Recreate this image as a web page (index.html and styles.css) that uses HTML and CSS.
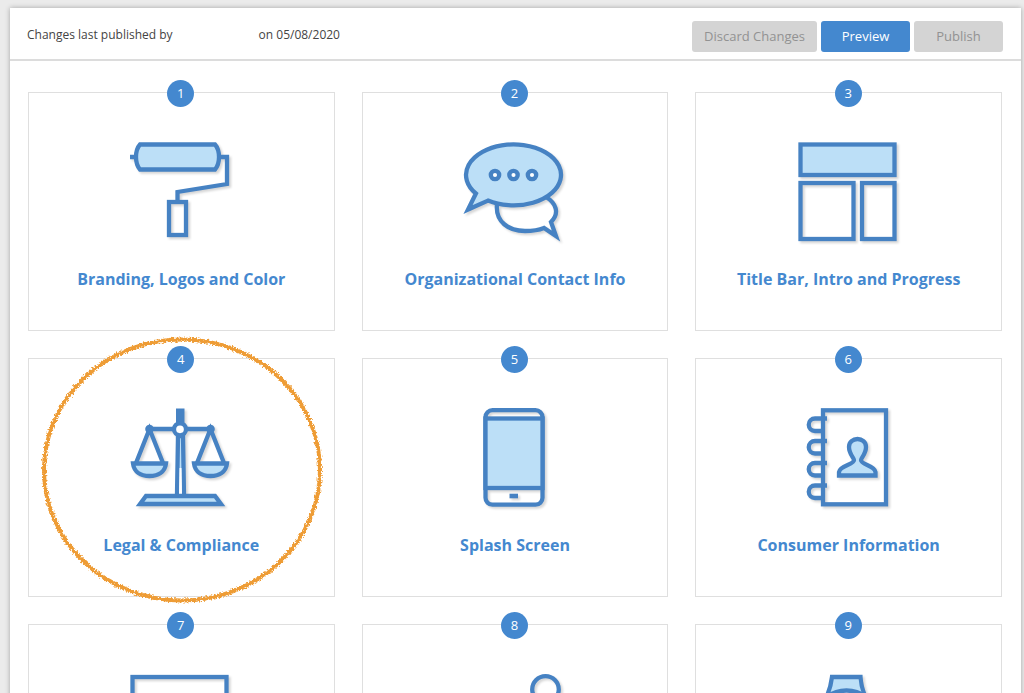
FILE: index.html
```
<!DOCTYPE html>
<html lang="en">
<head>
    <meta charset="UTF-8">
    <meta name="viewport" content="width=device-width, initial-scale=1.0">
    <title>Site Settings</title>
    <link rel="stylesheet" href="styles.css">
</head>
<body>
    <div class="panel">
        <!-- Publish bar -->
        <header class="topbar">
            <p class="published">
                <span>Changes last published by</span>
                <span>on 05/08/2020</span>
            </p>
            <div class="actions">
                <button type="button" class="btn" disabled>Discard Changes</button>
                <button type="button" class="btn btn-primary">Preview</button>
                <button type="button" class="btn" disabled>Publish</button>
            </div>
        </header>

        <!-- Steps -->
        <main class="cards">
            <a class="card" href="#branding">
                <span class="badge">1</span>
                <svg class="icon" viewBox="0 0 100 100" aria-hidden="true">
                    <path d="M-1 15H5M90 15H96V42L46.500 50V60"/>
                    <path class="tint" d="M9 2.500H84Q88 7 88 15T84 27.500H9Q5 23 5 15T9 2.500Z"/>
                    <rect x="38" y="60" width="17" height="33"/>
                </svg>
                <h2>Branding, Logos and Color</h2>
            </a>

            <a class="card" href="#contact">
                <span class="badge">2</span>
                <svg class="icon" viewBox="0 0 100 100" aria-hidden="true">
                    <path d="M32 62C30 80 44 89 60 89C67 89 74 88 79 86L91 94L86 80C95 71 91 61 81 55"/>
                    <path class="tint" d="M23 58.600L3 67.500L10.900 51.500A47.500 30.500 0 1 1 23 58.600Z"/>
                    <circle class="paper" cx="30" cy="33" r="4.2"/>
                    <circle class="paper" cx="48.500" cy="33" r="4.2"/>
                    <circle class="paper" cx="67" cy="33" r="4.2"/>
                </svg>
                <h2>Organizational Contact Info</h2>
            </a>

            <a class="card" href="#title-bar">
                <span class="badge">3</span>
                <svg class="icon" viewBox="0 0 100 100" aria-hidden="true">
                    <rect class="tint" x="1.500" y="2.500" width="94" height="30.500"/>
                    <rect x="1.500" y="41" width="53" height="56"/>
                    <rect x="63" y="41" width="32.500" height="56"/>
                </svg>
                <h2>Title Bar, Intro and Progress</h2>
            </a>

            <a class="card" href="#legal">
                <span class="badge">4</span>
                <svg class="icon" viewBox="0 0 100 100" aria-hidden="true">
                    <path class="tint" d="M47 28L46 87H53L52 28Z"/>
                    <path class="paper-fill" d="M48.500 60H50.500L51 86H48Z"/>
                    <path class="solid" d="M45 .5H53.500V15H45Z"/>
                    <path d="M18.500 21H80"/>
                    <path d="M5 55L18.500 21L32 55M66 55L79.500 21L93 55"/>
                    <path class="tint" d="M2 55.500H35C34 64 27 68 18.500 68S3 64 2 55.500Z"/>
                    <path class="tint" d="M63 55.500H96C95 64 88 68 79.500 68S64 64 63 55.500Z"/>
                    <circle class="solid" cx="18.500" cy="21" r="4.3"/>
                    <circle class="solid" cx="79.500" cy="21" r="4.3"/>
                    <circle class="paper" cx="49" cy="21.300" r="6"/>
                    <path class="tint" d="M15 88H84L90 96H9Z"/>
                </svg>
                <h2>Legal &amp; Compliance</h2>
                <!-- Hand drawn highlight -->
                <svg class="highlight" viewBox="0 0 282 266" aria-hidden="true">
                    <filter id="crayon" x="-5%" y="-5%" width="110%" height="110%">
                        <feTurbulence type="fractalNoise" baseFrequency="0.6" numOctaves="2" seed="4"/>
                        <feDisplacementMap in="SourceGraphic" scale="5" xChannelSelector="R" yChannelSelector="G"/>
                    </filter>
                    <ellipse cx="141" cy="133" rx="138" ry="130.500" filter="url(#crayon)"/>
                </svg>
            </a>

            <a class="card" href="#splash">
                <span class="badge">5</span>
                <svg class="icon" viewBox="0 0 100 100" aria-hidden="true">
                    <rect x="20.500" y="2.200" width="57" height="94.500" rx="7"/>
                    <rect class="tint" x="20.500" y="10.500" width="57" height="69.500"/>
                    <path class="solid" d="M44.500 85.700H53V90.300H44.500Z"/>
                </svg>
                <h2>Splash Screen</h2>
            </a>

            <a class="card" href="#consumer">
                <span class="badge">6</span>
                <svg class="icon" viewBox="0 0 100 100" aria-hidden="true">
                    <rect x="24" y="2.300" width="63" height="94"/>
                    <path d="M28 10.500H16a6.200 6.200 0 0 0 0 12.500H24M28 33H16a6.200 6.200 0 0 0 0 12.500H24M28 55H16a6.200 6.200 0 0 0 0 12.500H24M28 77.500H16a6.200 6.200 0 0 0 0 12.500H24"/>
                    <path class="tint" d="M40 67.500V64C41 57 55 57 55 52C55 50 50 46 50 39C50 34 54 31 58.500 31S67 34 67 39C67 46 62 50 62 52C62 57 75.500 57 76.500 64V67.500Z"/>
                </svg>
                <h2>Consumer Information</h2>
            </a>

            <a class="card" href="#display">
                <span class="badge">7</span>
                <svg class="icon" viewBox="0 0 100 100" aria-hidden="true">
                    <rect x="1.500" y="3" width="94" height="66"/>
                    <path d="M49 69V94M28 95H70"/>
                </svg>
            </a>

            <a class="card" href="#users">
                <span class="badge">8</span>
                <svg class="icon" viewBox="0 0 100 100" aria-hidden="true">
                    <circle cx="80.500" cy="15.500" r="13.300"/>
                    <path d="M71 26L30 67"/>
                </svg>
            </a>

            <a class="card" href="#schedule">
                <span class="badge">9</span>
                <svg class="icon" viewBox="0 0 100 100" aria-hidden="true">
                    <path class="tint" d="M33 3H61.500Q62 12 66 22H28Q32 12 33 3Z"/>
                    <circle class="paper" cx="47.500" cy="49" r="32.500"/>
                </svg>
            </a>
        </main>
    </div>
</body>
</html>
```
FILE: styles.css
```
* {
    box-sizing: border-box;
}

body {
    margin: 0;
    height: 100vh;
    overflow: hidden;
    padding: 8px 3px 0 10px;
    background: #ebebeb;
    font-family: "Open Sans", Arial, sans-serif;
    color: #444;
}

.panel {
    background: #fff;
    box-shadow: 0 0 5px rgba(0, 0, 0, 0.3);
}

/* Publish bar */
.topbar {
    display: flex;
    justify-content: space-between;
    height: 53px;
    padding: 13px 18px 0 17px;
    border-bottom: 2px solid #dcdcdc;
}

.published {
    display: flex;
    gap: 86px;
    margin: 5px 0 0;
    font-size: 12px;
    line-height: 18px;
}

.actions {
    display: flex;
    gap: 4px;
}

.btn {
    height: 31px;
    min-width: 89px;
    padding: 0 12px 2px;
    border: 0;
    border-radius: 3px;
    background: #d4d4d4;
    color: #929292;
    font-family: inherit;
    font-size: 13px;
}

.btn-primary {
    background: #4488cf;
    color: #fff;
    cursor: pointer;
}

/* Steps */
.cards {
    display: grid;
    grid-template-columns: repeat(3, 1fr);
    gap: 27px;
    padding: 31px 19px 27px 18px;
}

.card {
    position: relative;
    display: flex;
    flex-direction: column;
    align-items: center;
    min-height: 239px;
    padding-top: 49px;
    border: 1px solid #dfdfdf;
    color: #4488cf;
    text-decoration: none;
}

.badge {
    position: absolute;
    top: -13px;
    left: 50%;
    width: 27px;
    height: 27px;
    margin-left: -14px;
    border-radius: 50%;
    background: #4488cf;
    color: #fff;
    font-size: 13px;
    line-height: 26px;
    text-align: center;
}

.card h2 {
    margin: 25px 0 0;
    font-size: 16px;
    line-height: 24px;
    font-weight: 700;
}

/* Icons */
.icon {
    width: 100px;
    height: 100px;
    overflow: visible;
    fill: none;
    stroke: #4682c3;
    stroke-width: 4.3;
    filter: drop-shadow(2px 2px 1px rgba(0, 0, 0, 0.16));
}

.tint {
    fill: #bcdff7;
}

.paper {
    fill: #fff;
}

.paper-fill {
    fill: #fff;
    stroke: none;
}

.solid {
    fill: #4682c3;
    stroke: none;
}

.highlight {
    position: absolute;
    top: -22px;
    left: 12px;
    width: 282px;
    height: 266px;
    overflow: visible;
    fill: none;
    stroke: #ee9c35;
    stroke-width: 4;
    pointer-events: none;
}
```
